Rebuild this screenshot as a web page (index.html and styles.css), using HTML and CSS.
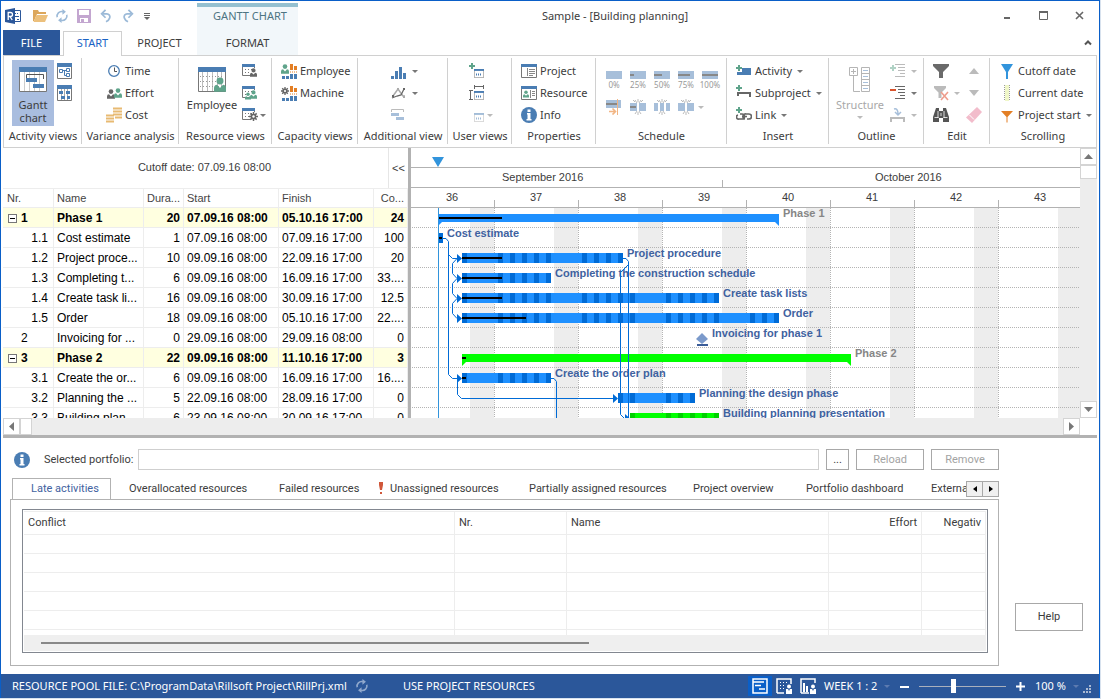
FILE: index.html
```html
<!DOCTYPE html>
<html lang="en">
<head>
<meta charset="utf-8">
<title>Sample - [Building planning]</title>
<link rel="stylesheet" href="styles.css">
</head>
<body>
<svg class="defs" width="0" height="0" aria-hidden="true">
  <symbol id="i-refresh" viewBox="0 0 16 16"><path d="M2.500 9.500A5.300 5.300 0 0 1 9 3M13.500 6.500A5.300 5.300 0 0 1 7 13" fill="none" stroke="currentColor" stroke-width="1.800"/><path d="M8.500 0l4 3.200-4 3.300zM7.500 9.500v6.500l-4-3.200z" fill="currentColor"/></symbol>
  <symbol id="i-undo" viewBox="0 0 16 16"><path d="M4.500 5.500H9a3.500 3.500 0 0 1 3.300 4.500Q11.500 13 8 14.500" fill="none" stroke="currentColor" stroke-width="2"/><path d="M7.500 1L3 5.500 7.500 10" fill="none" stroke="currentColor" stroke-width="2"/></symbol>
  <symbol id="i-info" viewBox="0 0 16 16"><circle cx="8" cy="8" r="8" fill="#4a7db3"/><path d="M6.500 2.500h3v2.400h-3zM6 6h3.500v6h1v1.500h-5V12h1V7.500H6z" fill="#fff"/></symbol>
  <symbol id="i-person" viewBox="0 0 10 12"><circle cx="5" cy="3" r="2.900" fill="currentColor"/><path d="M0 12V9q0-2.500 2.500-2.700L5 9l2.500-2.700Q10 6.500 10 9v3z" fill="currentColor"/></symbol>
  <symbol id="i-gear" viewBox="0 0 12 12"><path d="M6 0v12M0 6h12M1.800 1.800l8.400 8.400M10.200 1.800l-8.400 8.400" stroke="currentColor" stroke-width="2"/><circle cx="6" cy="6" r="3.800" fill="currentColor"/><circle cx="6" cy="6" r="1.600" fill="#fff"/></symbol>
  <symbol id="i-grid" viewBox="0 0 16 16"><path d="M.5 4v8.500H9M12.500 4v1" fill="none" stroke="#777"/><path d="M3 6.500h9M3 9.500h6" stroke="#777" stroke-dasharray="1 2"/><path d="M0 1h13v3H0z" fill="#4a7db3"/></symbol>
  <symbol id="i-plus" viewBox="0 0 6 6"><path d="M2 0h2v2h2v2H4v2H2V4H0V2h2z" fill="currentColor"/></symbol>
  <symbol id="i-bars" viewBox="0 0 16 16"><path d="M1 13h3v3H1zM5 13h3v3H5zM9 11h3v5H9zM13 11h3v5h-3z" fill="#4a7db3"/><path d="M9 1h3v6H9zM13 3h3v4h-3z" fill="#e37f25"/><path d="M9 9h7" stroke="#e37f25" stroke-dasharray="1 1"/></symbol>
  <symbol id="i-window" viewBox="0 0 16 14" preserveAspectRatio="none"><path d="M.5.5h15v13H.5z" fill="#fff" stroke="#777"/><path d="M0 0h16v3H0z" fill="#4a7db3"/></symbol>
  <symbol id="i-spark" viewBox="0 0 16 16"><path d="M5 1l2 3M8 0v3M11 1L9 4M3 1l2 2M13 1l-2 2M5 15l2-3M8 16v-3M11 15l-2-3" stroke="#bbb"/></symbol>
  <symbol id="i-outline" viewBox="0 0 10 14"><path d="M0 .5h10M3 3.500h7M3 6.500h7M5 9.500h5M0 12.500h10" stroke="currentColor" stroke-width="1"/></symbol>
  <symbol id="i-pin" viewBox="0 0 12 16"><path d="M0 1h12L7 9v7H5V9z" fill="currentColor"/></symbol>
</svg>

<div class="window">
  <header class="titlebar">
    <div class="quick">
      <svg class="logo" viewBox="0 0 16 16"><path d="M7.500 2.500h8v11h-8z" fill="#fff" stroke="#2b579a"/><path d="M9 5.500h2M10 8.500h4M12 11.500h2M9 11.500h1M12 5.500h1" stroke="#2b579a"/><path d="M0 2l10-2v16L0 14z" fill="#2b579a"/><path d="M3.200 12V4.500h2.300a1.800 1.800 0 0 1 0 4H3.200M5 8.500L7.200 12" fill="none" stroke="#fff" stroke-width="1.300"/></svg>
      <button aria-label="Open"><svg viewBox="0 0 16 16"><path d="M1 13V2h5l1 2h7v2H5L2 13z" fill="#dca75c"/><path d="M4.500 7H16l-3 7H1.500z" fill="#ecc07c"/></svg></button>
      <button class="pale" aria-label="Refresh"><svg><use href="#i-refresh"/></svg></button>
      <button aria-label="Save"><svg viewBox="0 0 16 16"><path d="M1 1h14v14H1z" fill="#c3a6d0"/><path d="M3 2h10v5H3zM4 10h8v4H4z" fill="#fff"/><path d="M5 11h3v3H5z" fill="#c3a6d0"/></svg></button>
      <button class="pale" aria-label="Undo"><svg><use href="#i-undo"/></svg></button>
      <button class="pale flip" aria-label="Redo"><svg><use href="#i-undo"/></svg></button>
      <button class="narrow" aria-label="Customize"><svg viewBox="0 0 16 16"><path d="M5 5.500h6M5 7.500h6" stroke="#666"/><path d="M5 9h6l-3 3z" fill="#666"/></svg></button>
    </div>
    <div class="context-title">GANTT CHART</div>
    <div class="title">Sample - [Building planning]</div>
    <div class="controls">
      <button aria-label="Minimize"><svg viewBox="0 0 16 16"><path d="M5 10h6" stroke="#666" stroke-width="2"/></svg></button>
      <button aria-label="Maximize"><svg viewBox="0 0 16 16"><path d="M4.500 4.500h8v7h-8z" fill="none" stroke="#666"/><path d="M4 4h9" stroke="#666" stroke-width="2"/></svg></button>
      <button aria-label="Close"><svg viewBox="0 0 16 16"><path d="M5 4l7 7M12 4l-7 7" stroke="#666" stroke-width="1.600"/></svg></button>
    </div>
  </header>
  <nav class="tabs">
    <button class="tab file">FILE</button>
    <button class="tab start">START</button>
    <button class="tab project">PROJECT</button>
    <button class="tab format">FORMAT</button>
    <button class="collapse" aria-label="Collapse ribbon"><svg viewBox="0 0 16 16"><path d="M5 9.500l3-3 3 3" fill="none" stroke="#555" stroke-width="2"/></svg></button>
  </nav>

  <div class="ribbon">
    <section class="group g-activity">
      <div class="body">
        <button class="big active"><svg class="icon-l" viewBox="0 0 28 25"><path d="M.5 2.500h27v22H.5z" fill="#fff" stroke="#777"/><path d="M5.500 5v19M10.500 5v19M15.500 5v19M20.500 5v19" stroke="#ccc"/><path d="M0 0h28v5H0z" fill="#4a7db3"/><path d="M7.500 12V7.500h17V12" fill="none" stroke="#555"/><path d="M7 11h11v4H7zM14 17h11v4H14z" fill="#4a7db3"/></svg><span>Gantt<br>chart</span></button>
        <div class="col">
          <button class="cmd" aria-label="Network"><svg viewBox="0 0 16 16"><path d="M.5.5h14v15H.5z" fill="#fff" stroke="#777"/><path d="M0 0h15v4H0z" fill="#4a7db3"/><path d="M2.500 6.500h3v3h-3zM9.500 5.500h3v3h-3zM9.500 10.500h3v3h-3zM5.500 7.500h4M7.500 7.500v5h2" fill="none" stroke="#4a7db3"/></svg></button>
          <button class="cmd" aria-label="Phase plan"><svg viewBox="0 0 16 16"><path d="M.5.5h14v15H.5z" fill="#fff" stroke="#777"/><path d="M4.500 4v11M7.500 4v11M10.500 4v11" stroke="#aaa"/><path d="M0 0h15v4H0zM2 6h4v3H2zM9 6h4v3H9zM4 11h4v3H4zM10 11h3v3h-3z" fill="#4a7db3"/></svg></button>
        </div>
      </div>
      <h2>Activity views</h2>
    </section>
    <section class="group g-variance">
      <div class="body"><div class="col">
        <button class="cmd"><svg viewBox="0 0 16 16"><circle cx="8" cy="8" r="5.300" fill="#fff" stroke="#4a7db3" stroke-width="1.300"/><path d="M8.500 4.500v4H11" fill="none" stroke="#555"/></svg>Time</button>
        <button class="cmd"><svg viewBox="0 0 16 16"><use href="#i-person" x="1" y="4" width="8" height="10" color="#666"/><use href="#i-person" x="8" y="3" width="8" height="10" color="#5fa48b"/></svg>Effort</button>
        <button class="cmd"><svg viewBox="0 0 16 16"><path d="M7 1.500h9M7 4.500h9M7 7.500h9M9 10.500h7M0 8.500h8M0 11.500h8M0 14.500h8" stroke="#e8ba72" stroke-width="2"/></svg>Cost</button>
      </div></div>
      <h2>Variance analysis</h2>
    </section>
    <section class="group g-resource">
      <div class="body">
        <button class="big"><svg class="icon-l" viewBox="0 0 28 25"><path d="M.5 2.500h27v22H.5z" fill="#fff" stroke="#777"/><path d="M4.500 5v19M9.500 5v19M14.500 5v19M19.500 5v19M23.500 5v19" stroke="#bbb"/><path d="M2 9.500h24M2 14.500h24M2 19.500h24" stroke="#999" stroke-dasharray="1 2"/><path d="M0 0h28v5H0z" fill="#4a7db3"/><use href="#i-person" x="16" y="10" width="12" height="15" color="#5fa48b"/></svg><span>Employee</span></button>
        <div class="col">
          <button class="cmd" aria-label="Employee load"><svg viewBox="0 0 16 16"><use href="#i-grid"/><use href="#i-person" x="8" y="5" width="7" height="9" color="#666"/></svg></button>
          <button class="cmd" aria-label="Team load"><svg viewBox="0 0 16 16"><use href="#i-grid"/><use href="#i-person" x="3" y="7" width="6" height="8" color="#5fa48b"/><use href="#i-person" x="8" y="5" width="7" height="9" color="#5fa48b"/></svg></button>
          <button class="cmd" aria-label="Machine load"><svg viewBox="0 0 16 16"><use href="#i-grid"/><use href="#i-gear" x="7" y="5" width="9" height="9" color="#666"/></svg><i class="caret"></i></button>
        </div>
      </div>
      <h2>Resource views</h2>
    </section>
    <section class="group g-capacity">
      <div class="body"><div class="col">
        <button class="cmd"><svg viewBox="0 0 16 16"><use href="#i-bars"/><use href="#i-person" x="0" y="1" width="8" height="10" color="#5fa48b"/></svg>Employee</button>
        <button class="cmd"><svg viewBox="0 0 16 16"><use href="#i-bars"/><use href="#i-gear" x="0" y="2" width="8" height="8" color="#666"/></svg>Machine</button>
      </div></div>
      <h2>Capacity views</h2>
    </section>
    <section class="group g-additional">
      <div class="body"><div class="col">
        <button class="cmd" aria-label="Histogram"><svg viewBox="0 0 16 16"><path d="M0 13h3v3H0zM4 8h3v8H4zM8 4h3v12H8zM12 10h3v6h-3z" fill="#4a7db3"/></svg><i class="caret"></i></button>
        <button class="cmd" aria-label="Curves"><svg viewBox="0 0 16 16"><path d="M2 11L7 4l5 7h2" fill="none" stroke="#aaa" stroke-width="1.500"/><path d="M1 13l5-2 4-1 3-6" fill="none" stroke="#666" stroke-width="1.300"/><path d="M1 10h2v2H1zM12 3h2v2h-2z" fill="#666"/><path d="M6 3h2v2H6zM12 11h2v2h-2z" fill="#aaa"/></svg><i class="caret"></i></button>
        <button class="cmd" aria-label="Bars"><svg viewBox="0 0 16 16"><path d="M.5 5V2.500h12V5" fill="none" stroke="#bbb"/><path d="M0 6h8v3H0zM5 10h8v3H5z" fill="#a7bfda"/></svg></button>
      </div></div>
      <h2>Additional view</h2>
    </section>
    <section class="group g-user">
      <div class="body"><div class="col">
        <button class="cmd" aria-label="Add view"><svg viewBox="0 0 16 16"><use href="#i-plus" x="0" y="0" width="6" height="6" color="#5fa48b"/><use href="#i-window" x="5" y="6" width="10" height="9"/><path d="M7 11.500h6" stroke="#4a7db3" stroke-width="2" stroke-dasharray="1 1"/></svg></button>
        <button class="cmd" aria-label="Size view"><svg viewBox="0 0 16 16"><path d="M5.500 0v4M14.500 0v4M5 1.500h10M0 5.500h4M0 14.500h4M1.500 5v10" stroke="#666"/><use href="#i-window" x="5" y="6" width="10" height="9"/><path d="M7 11.500h6" stroke="#4a7db3" stroke-width="2" stroke-dasharray="1 1"/></svg></button>
        <button class="cmd off" aria-label="Delete view"><svg viewBox="0 0 16 16"><use href="#i-window" x="5" y="6" width="10" height="9"/><path d="M7 11.500h6" stroke="#4a7db3" stroke-width="2" stroke-dasharray="1 1"/></svg><i class="caret"></i></button>
      </div></div>
      <h2>User views</h2>
    </section>
    <section class="group g-properties">
      <div class="body"><div class="col">
        <button class="cmd"><svg viewBox="0 0 16 16"><use href="#i-window" x="0" y="1" width="16" height="14"/><path d="M6.500 5v8M8 6.500h6M8 8.500h6M8 10.500h6M8 12.500h4" stroke="#888"/></svg>Project</button>
        <button class="cmd"><svg viewBox="0 0 16 16"><use href="#i-window" x="0" y="1" width="16" height="14"/><use href="#i-person" x="2" y="5" width="6" height="8" color="#5fa48b"/><path d="M9.500 5v8M11 6.500h3M11 8.500h3M11 10.500h3" stroke="#888"/></svg>Resource</button>
        <button class="cmd"><svg><use href="#i-info"/></svg>Info</button>
      </div></div>
      <h2>Properties</h2>
    </section>
    <section class="group g-schedule">
      <div class="body">
        <button class="pct"><svg viewBox="0 0 16 8"><path d="M0 0h16v8H0z" fill="#a7bfda"/></svg>0%</button>
        <button class="pct"><svg viewBox="0 0 16 8"><path d="M0 0h16v8H0z" fill="#a7bfda"/><path d="M0 4h4" stroke="#888" stroke-width="2"/></svg>25%</button>
        <button class="pct"><svg viewBox="0 0 16 8"><path d="M0 0h16v8H0z" fill="#a7bfda"/><path d="M0 4h8" stroke="#888" stroke-width="2"/></svg>50%</button>
        <button class="pct"><svg viewBox="0 0 16 8"><path d="M0 0h16v8H0z" fill="#a7bfda"/><path d="M0 4h12" stroke="#888" stroke-width="2"/></svg>75%</button>
        <button class="pct"><svg viewBox="0 0 16 8"><path d="M0 0h16v8H0z" fill="#a7bfda"/><path d="M0 4h16" stroke="#888" stroke-width="2"/></svg>100%</button>
        <button class="cmd" aria-label="Move to cutoff date"><svg viewBox="0 0 16 16"><path d="M0 1h15v8H0z" fill="#a7bfda"/><path d="M0 5h12" stroke="#888" stroke-width="2"/><path d="M11.500 0v16" stroke="#f2b583"/><path d="M3 12.500h6M6.500 9.500l3 3-3 3" fill="none" stroke="#f2b583" stroke-width="1.600"/></svg></button>
        <button class="cmd" aria-label="Split"><svg viewBox="0 0 16 16"><path d="M0 4h7v8H0zM9 4h7v8H9z" fill="#a7bfda"/><path d="M0 8h6" stroke="#888" stroke-width="2"/><use href="#i-spark"/></svg></button>
        <button class="cmd" aria-label="Split parts"><svg viewBox="0 0 16 16"><path d="M0 4h4v8H0zM6 4h4v8H6zM12 4h4v8h-4z" fill="#a7bfda"/><use href="#i-spark"/></svg></button>
        <button class="cmd" aria-label="Join"><svg viewBox="0 0 16 16"><path d="M0 4h7v8H0zM9 4h7v8H9z" fill="#a7bfda"/><use href="#i-spark"/></svg></button>
        <button class="cmd faint more" aria-label="More"><i class="caret"></i></button>
      </div>
      <h2>Schedule</h2>
    </section>
    <section class="group g-insert">
      <div class="body"><div class="col">
        <button class="cmd"><svg viewBox="0 0 16 16"><path d="M6 5h9v7H1V9h5z" fill="#4a7db3"/><use href="#i-plus" x="0" y="2" width="6" height="6" color="#5fa48b"/></svg>Activity<i class="caret"></i></button>
        <button class="cmd"><svg viewBox="0 0 16 16"><path d="M2 11V8h12v4" fill="none" stroke="#666" stroke-width="2"/><use href="#i-plus" x="0" y="0" width="6" height="6" color="#5fa48b"/></svg>Subproject<i class="caret"></i></button>
        <button class="cmd"><svg viewBox="0 0 16 16"><path d="M4 7h2a2 2 0 0 1 0 5H3a2 2 0 0 1-1-4M9 12a2 2 0 1 1 1-5h3a2 2 0 0 1 0 5h-2M6 9.500h5" fill="none" stroke="#666" stroke-width="1.700"/><use href="#i-plus" x="0" y="0" width="6" height="6" color="#5fa48b"/></svg>Link<i class="caret"></i></button>
      </div></div>
      <h2>Insert</h2>
    </section>
    <section class="group g-outline">
      <div class="body">
        <button class="big faint"><svg class="icon-l" viewBox="0 0 28 25"><path d="M3.500.5h8v8h-8zM7.500 9v15.500H14M5 4.500h5M7.500 2v5" fill="none" stroke="#b5b5b5"/><path d="M15.500.5h8v24h-8zM15.500 6.500h8M15.500 12.500h8M15.500 18.500h8" fill="none" stroke="#b5b5b5"/><path d="M17 3.500h5M17 9.500h5M17 15.500h5M17 21.500h5" stroke="#a7bfda"/></svg><span>Structure</span><i class="caret"></i></button>
        <div class="col">
          <button class="cmd faint" aria-label="Indent"><svg viewBox="0 0 16 16"><use href="#i-outline" x="5" y="1" width="10" height="14" color="#bbb"/><use href="#i-plus" x="0" y="2" width="6" height="6" color="#b0d2c5"/></svg><i class="caret"></i></button>
          <button class="cmd" aria-label="Outdent"><svg viewBox="0 0 16 16"><use href="#i-outline" x="5" y="1" width="10" height="14" color="#666"/><path d="M0 5h6" stroke="#d9532c" stroke-width="2"/></svg><i class="caret"></i></button>
          <button class="cmd faint" aria-label="Move outline"><svg viewBox="0 0 16 16"><path d="M1 15v-4h13v4" fill="none" stroke="#bbb" stroke-width="2"/><path d="M4 2q4-1 4 5M5 5l3 3 3-3" fill="none" stroke="#a7bfda" stroke-width="1.500"/></svg><i class="caret"></i></button>
        </div>
      </div>
      <h2>Outline</h2>
    </section>
    <section class="group g-edit">
      <div class="body">
        <div class="col">
          <button class="cmd" aria-label="Filter"><svg viewBox="0 0 16 16"><path d="M0 1h16v2l-6 6v6H6V9L0 3z" fill="#6a6a6a"/></svg></button>
          <button class="cmd faint" aria-label="Clear filter"><svg viewBox="0 0 16 16"><path d="M1 1h12v2L8.500 7.500V13h-3V7.500L1 3z" fill="#bbb"/><path d="M8 7l7 8M15 7l-7 8" stroke="#ee9d8c" stroke-width="1.600"/></svg><i class="caret"></i></button>
          <button class="cmd" aria-label="Find"><svg viewBox="0 0 16 16"><path d="M3 1h3v3h4V1h3l3 9v5h-6v-4H6v4H0v-5z" fill="#555"/><path d="M5 4v7M11 4v7M8 6v3M1.500 10.500h4M10.500 10.500h4" stroke="#fff" stroke-width=".8"/></svg></button>
        </div>
        <div class="col">
          <button class="cmd" aria-label="Up"><svg viewBox="0 0 16 16"><path d="M3 11h10L8 5z" fill="#bbb"/></svg></button>
          <button class="cmd" aria-label="Down"><svg viewBox="0 0 16 16"><path d="M3 5h10l-5 6z" fill="#bbb"/></svg></button>
          <button class="cmd" aria-label="Erase"><svg viewBox="0 0 16 16"><path d="M11 0l5 5L6 16 0 10.500z" fill="#f2bccb"/><path d="M3.500 8L8 12.500" stroke="#fff"/></svg></button>
        </div>
      </div>
      <h2>Edit</h2>
    </section>
    <section class="group g-scrolling">
      <div class="body"><div class="col">
        <button class="cmd"><svg class="blue"><use href="#i-pin"/></svg>Cutoff date</button>
        <button class="cmd"><svg viewBox="0 0 16 16"><path d="M6 0h4v16H6z" fill="#f0f7c9"/><path d="M5.500 0v16M10.500 0v16" stroke="#999" stroke-dasharray="1 1"/></svg>Current date</button>
        <button class="cmd"><svg viewBox="0 0 16 16"><path d="M2 4h12L8.500 10v5.500h-1V10z" fill="#e37f25"/></svg>Project start<i class="caret"></i></button>
      </div></div>
      <h2>Scrolling</h2>
    </section>
  </div>

  <main class="work">
    <section class="sheet">
      <div class="cutoff"><span>Cutoff date: 07.09.16 08:00</span><button>&lt;&lt;</button></div>
      <table class="plan">
        <colgroup><col class="c-nr"><col class="c-name"><col class="c-dur"><col class="c-date"><col class="c-date"><col class="c-cost"></colgroup>
        <thead><tr><th>Nr.</th><th>Name</th><th class="num">Dura...</th><th>Start</th><th>Finish</th><th class="num">Co...</th></tr></thead>
        <tbody>
          <tr class="phase"><td class="top"><button class="fold" aria-label="Collapse"></button>1</td><td>Phase 1</td><td class="num">20</td><td>07.09.16 08:00</td><td>05.10.16 17:00</td><td class="num">24</td></tr>
          <tr><td class="num sub">1.1</td><td>Cost estimate</td><td class="num">1</td><td>07.09.16 08:00</td><td>07.09.16 17:00</td><td class="num">100</td></tr>
          <tr><td class="num sub">1.2</td><td>Project proce...</td><td class="num">10</td><td>09.09.16 08:00</td><td>22.09.16 17:00</td><td class="num">20</td></tr>
          <tr><td class="num sub">1.3</td><td>Completing t...</td><td class="num">6</td><td>09.09.16 08:00</td><td>16.09.16 17:00</td><td class="num">33....</td></tr>
          <tr><td class="num sub">1.4</td><td>Create task li...</td><td class="num">16</td><td>09.09.16 08:00</td><td>30.09.16 17:00</td><td class="num">12.5</td></tr>
          <tr><td class="num sub">1.5</td><td>Order</td><td class="num">18</td><td>09.09.16 08:00</td><td>05.10.16 17:00</td><td class="num">22....</td></tr>
          <tr><td class="leaf">2</td><td>Invoicing for ...</td><td class="num">0</td><td>29.09.16 08:00</td><td>29.09.16 08:00</td><td class="num">0</td></tr>
          <tr class="phase"><td class="top"><button class="fold" aria-label="Collapse"></button>3</td><td>Phase 2</td><td class="num">22</td><td>09.09.16 08:00</td><td>11.10.16 17:00</td><td class="num">3</td></tr>
          <tr><td class="num sub">3.1</td><td>Create the or...</td><td class="num">6</td><td>09.09.16 08:00</td><td>16.09.16 17:00</td><td class="num">16....</td></tr>
          <tr><td class="num sub">3.2</td><td>Planning the ...</td><td class="num">5</td><td>22.09.16 08:00</td><td>28.09.16 17:00</td><td class="num">0</td></tr>
          <tr><td class="num sub">3.3</td><td>Building plan...</td><td class="num">6</td><td>23.09.16 08:00</td><td>30.09.16 17:00</td><td class="num">0</td></tr>
        </tbody>
      </table>
    </section>
    <div class="splitter"></div>
    <section class="gantt">
      <div class="marker"><svg viewBox="0 0 12 10"><path d="M0 0h12L6 10z" fill="#3294dc"/></svg></div>
      <div class="months"><span class="sep">September 2016</span><span class="oct">October 2016</span></div>
      <div class="weeks"><span>36</span><span>37</span><span>38</span><span>39</span><span>40</span><span>41</span><span>42</span><span>43</span></div>
      <svg class="chart" aria-label="Gantt chart">
        <defs>
          <pattern id="grid" patternUnits="userSpaceOnUse" x="494" y="208" width="84" height="20"><path d="M60 0h24v20H60z" fill="#ededed"/><path d="M0 19.500h84M.5 0v20" stroke="#b4b4b4" stroke-dasharray="1 1"/></pattern>
          <pattern id="days" patternUnits="userSpaceOnUse" x="494" y="0" width="84" height="20"><path d="M4 0h5v20H4zM16 0h5v20h-5zM28 0h5v20h-5zM40 0h5v20h-5zM52 0h5v20h-5z" fill="#006bd6"/></pattern>
          <pattern id="days-green" patternUnits="userSpaceOnUse" x="494" y="0" width="84" height="20"><path d="M4 0h5v20H4zM16 0h5v20h-5zM28 0h5v20h-5zM40 0h5v20h-5zM52 0h5v20h-5z" fill="#00d000"/></pattern>
        </defs>
        <g transform="translate(-411 -208)">
          <rect x="411" y="208" width="3000" height="2000" fill="url(#grid)"/>
          <path class="blue-bar" d="M438 214h341v12l-4-4H442l-4 4z"/>
          <path class="green-bar" d="M462 354h389v12l-4-4H466l-4 4z"/>
          <g class="blue-bar"><path d="M462 253h161v10H462zM462 273h89v10h-89zM462 293h257v10H462zM462 313h317v10H462zM462 373h89v10h-89zM618 393h77v10h-77z"/></g>
          <path d="M438 233h5v10h-5z" fill="#006bd6"/>
          <path class="green-bar" d="M630 413h89v10h-89z"/>
          <path d="M462 253h161v10H462zM462 273h89v10h-89zM462 293h257v10H462zM462 313h317v10H462zM462 373h89v10h-89zM618 393h77v10h-77z" fill="url(#days)"/>
          <path d="M630 413h89v10h-89z" fill="url(#days-green)"/>
          <path d="M438 218h64M438 238h4M462 258h40M462 278h40M462 298h40M462 318h64M462 358h4M462 378h4" stroke="#000" stroke-width="2"/>
          <path d="M702 333l6 6-6 5-6-5z" fill="#7b9acb"/><path d="M697 345h11" stroke="#3b5d99" stroke-width="2"/>
          <g class="bar-labels">
            <text class="grey" x="783" y="217">Phase 1</text>
            <text x="447" y="237">Cost estimate</text>
            <text x="627" y="257">Project procedure</text>
            <text x="555" y="277">Completing the construction schedule</text>
            <text x="723" y="297">Create task lists</text>
            <text x="783" y="317">Order</text>
            <text x="712" y="337">Invoicing for phase 1</text>
            <text class="grey" x="855" y="357">Phase 2</text>
            <text x="555" y="377">Create the order plan</text>
            <text x="699" y="397">Planning the design phase</text>
            <text x="723" y="417">Building planning presentation</text>
          </g>
          <path d="M438.500 208v2000" stroke="#3294dc"/>
          <path d="M443 238.500h3l2.500 3V374.500l4 4H457M448.500 254.500l4 4H457M457 258.500l-4.500 5v10l4.500 5-4.500 5v10l4.500 5-4.500 5v10l4.500 5M623 258.500h3l2.500 3V418M628.500 264.500l-8 8V414.500l4 4M551 378.500h3l2.500 3V430M457.500 379v15.500l4 4H613" fill="none" stroke="#006bd6"/>
          <path d="M457 254l5 4.500-5 4.500zM457 274l5 4.500-5 4.500zM457 294l5 4.500-5 4.500zM457 314l5 4.500-5 4.500zM457 374l5 4.500-5 4.500zM613 394l5 4.500-5 4.500zM625 414l5 4.500-5 4.500z" fill="#006bd6"/>
        </g>
      </svg>
    </section>
    <div class="vscroll"><button aria-label="Scroll up"><svg viewBox="0 0 9 5"><path d="M0 5h9L4.500 0z" fill="#777"/></svg></button><div class="thumb"></div><button class="end" aria-label="Scroll down"><svg viewBox="0 0 9 5"><path d="M0 0h9L4.500 5z" fill="#777"/></svg></button></div>
    <div class="hscroll"><button aria-label="Scroll left"><svg viewBox="0 0 5 9"><path d="M5 0v9L0 4.500z" fill="#777"/></svg></button><div class="thumb"></div><button class="end" aria-label="Scroll right"><svg viewBox="0 0 5 9"><path d="M0 0v9l5-4.500z" fill="#777"/></svg></button></div>
    <div class="hsplit"></div>
  </main>

  <section class="lower">
    <div class="portfolio">
      <svg class="info"><use href="#i-info"/></svg>
      <label for="portfolio">Selected portfolio:</label>
      <input id="portfolio" type="text">
      <button class="btn dots">...</button>
      <button class="btn" disabled>Reload</button>
      <button class="btn" disabled>Remove</button>
    </div>
    <div class="subtabs">
      <button class="late">Late activities</button>
      <button class="over">Overallocated resources</button>
      <button class="failed">Failed resources</button>
      <button class="unassigned"><svg viewBox="0 0 4 13"><path d="M0 0h4v3L3 8H1L0 3zM1 10h2v2H1z" fill="#d0573a"/></svg>Unassigned resources</button>
      <button class="partial">Partially assigned resources</button>
      <button class="overview">Project overview</button>
      <button class="dash">Portfolio dashboard</button>
      <button class="external">External</button>
      <span class="spin"><button aria-label="Previous tab"><svg viewBox="0 0 4 6"><path d="M4 0v6L0 3z"/></svg></button><button aria-label="Next tab"><svg viewBox="0 0 4 6"><path d="M0 0v6l4-3z"/></svg></button></span>
    </div>
    <div class="panel">
      <div class="list">
        <table>
          <colgroup><col class="k-conflict"><col class="k-nr"><col><col class="k-effort"><col class="k-neg"></colgroup>
          <thead><tr><th>Conflict</th><th>Nr.</th><th>Name</th><th class="num">Effort</th><th class="num">Negativ</th></tr></thead>
          <tbody>
            <tr><td></td><td></td><td></td><td></td><td></td></tr>
            <tr><td></td><td></td><td></td><td></td><td></td></tr>
            <tr><td></td><td></td><td></td><td></td><td></td></tr>
            <tr><td></td><td></td><td></td><td></td><td></td></tr>
            <tr><td></td><td></td><td></td><td></td><td></td></tr>
            <tr class="cut"><td></td><td></td><td></td><td></td><td></td></tr>
          </tbody>
        </table>
        <div class="list-scroll"><div></div></div>
      </div>
    </div>
    <button class="btn help">Help</button>
  </section>

  <footer class="status">
    <span class="pool">RESOURCE POOL FILE: C:\ProgramData\Rillsoft Project\RillPrj.xml</span>
    <svg class="sync"><use href="#i-refresh"/></svg>
    <span>USE PROJECT RESOURCES</span>
    <div class="right">
      <button class="view on" aria-label="Gantt view"><svg viewBox="0 0 16 16"><path d="M1 1h14v14H1z" fill="none" stroke="#fff" stroke-width="1.500"/><path d="M1 4h11M3 7.500h6M7 11h6" stroke="#fff" stroke-width="1.500"/></svg></button>
      <button class="view" aria-label="Resource view"><svg viewBox="0 0 16 16"><path d="M1 15V1h14v5M1 15h7" fill="none" stroke="#fff" stroke-width="1.500"/><path d="M4 4.500h9M4 7.500h6M4 10.500h5" stroke="#fff" stroke-dasharray="1 2"/><circle cx="13" cy="8.500" r="2" fill="#fff"/><path d="M10 11h2l1 2 1-2h2v5h-6z" fill="#fff"/></svg></button>
      <button class="view" aria-label="Capacity view"><svg viewBox="0 0 16 16"><path d="M1 15V1h14v4M1 15h8" fill="none" stroke="#fff" stroke-width="1.500"/><path d="M3 5h2v9H3zM6 8h2v6H6z" fill="#fff"/><circle cx="13" cy="8.500" r="2" fill="#fff"/><path d="M10 11h2l1 2 1-2h2v5h-6z" fill="#fff"/></svg></button>
      <button class="scale">WEEK 1 : 2<i class="caret"></i></button>
      <button class="step" aria-label="Zoom out"><svg viewBox="0 0 9 9"><path d="M0 5h9" stroke="#fff" stroke-width="2"/></svg></button>
      <input type="range" min="0" max="100" value="39" aria-label="Zoom">
      <button class="step" aria-label="Zoom in"><svg viewBox="0 0 9 9"><path d="M0 4.500h9M4.500 0v9" stroke="#fff" stroke-width="2"/></svg></button>
      <button class="zoom">100 %<i class="caret"></i></button>
      <svg class="grip" viewBox="0 0 9 9"><path d="M6 0h2v2H6zM3 3h2v2H3zM6 3h2v2H6zM0 6h2v2H0zM3 6h2v2H3zM6 6h2v2H6z" fill="#a9b9d3"/></svg>
    </div>
  </footer>
</div>
</body>
</html>
```
FILE: styles.css
```css
* { box-sizing: border-box; }
body { margin: 0; background: #d8e2ee; font: 11px/14px "Noto Sans", "Open Sans", sans-serif; color: #3c3c3c; }
button { font: inherit; color: inherit; background: none; border: 0; padding: 0; margin: 0; }
button svg { display: block; flex: none; }
h2 { margin: 0; font: inherit; }
.defs { position: absolute; }
.window { display: flex; flex-direction: column; height: calc(100vh - 1px); margin-right: 1px; border: 1px solid #0a5fc8; border-bottom: 0; background: #fff; }
.caret { flex: none; width: 0; height: 0; border: 3px solid transparent; border-top-color: #777; border-bottom: 0; }

/* title bar and tabs */
.titlebar { display: flex; height: 29px; flex: none; padding: 0 2px; }
.quick { display: flex; align-items: center; width: 194px; padding-left: 2px; }
.quick button { width: 22px; display: grid; place-items: center; }
.quick svg, .controls svg { width: 16px; height: 16px; }
.quick .logo { margin-right: 8px; }
.quick .narrow { width: 14px; }
.quick .pale svg { width: 14px; height: 14px; }
.pale { color: #9cbad8; }
.flip svg { transform: scaleX(-1); }
.context-title { width: 101px; margin-top: 2px; padding-left: 5px; border-top: 4px solid #94c0d0; background: #f2f7fa; color: #4d7482; text-align: center; line-height: 18px; }
.title { flex: 1; text-align: center; line-height: 30px; }
.controls { display: flex; padding-left: 57px; }
.controls button { width: 36px; display: grid; place-items: center; }
.tabs { display: flex; height: 25px; flex: none; padding: 0 2px; }
.tab { text-align: center; }
.file { width: 57px; background: #2b579a; color: #fff; }
.start { width: 59px; height: 25px; margin: 1px 0 0 3px; padding-bottom: 2px; border: 1px solid #d0d0d0; border-bottom: 0; background: #fff; color: #1a63c5; position: relative; z-index: 1; }
.project { width: 75px; }
.format { width: 101px; background: #f2f7fa; }
.collapse { margin-left: auto; padding-right: 1px; }
.collapse svg { width: 16px; height: 16px; }

/* ribbon */
.ribbon { display: flex; flex: none; margin: 0 2px; height: 93px; border: 1px solid #d0d0d0; }
.group { flex: none; position: relative; }
.group::after { content: ""; position: absolute; right: 0; top: 2px; bottom: 3px; border-right: 1px solid #d0d0d0; }
.group:last-child::after { display: none; }
.body { display: flex; height: 70px; padding-top: 4px; }
.group h2 { text-align: center; line-height: 20px; white-space: nowrap; }
.col { display: grid; grid-auto-rows: 22px; align-content: start; }
.cmd { display: flex; align-items: center; gap: 3px; white-space: nowrap; height: 22px; }
.cmd svg { width: 16px; height: 16px; }
.cmd .caret { margin-left: 2px; }
.big { display: flex; flex-direction: column; align-items: center; padding-top: 7px; line-height: 13px; height: 66px; }
.big span { margin-top: 6px; }
.big .caret { margin-top: 5px; }
.icon-l { width: 28px; height: 25px; }
.active { background: #a9bddf; }
.off { opacity: .5; }
.faint { color: #a8a8a8; }
.faint .caret { border-top-color: #bbb; }
.blue { color: #3294dc; }
.g-activity { width: 78px; }
.g-activity .body { padding-left: 8px; gap: 3px; }
.g-activity .big { width: 42px; }
.g-variance { width: 97px; }
.g-variance .body { padding-left: 24px; }
.g-resource { width: 93px; }
.g-resource .body { padding-left: 7px; gap: 4px; }
.g-resource .big { width: 52px; }
.g-resource .cmd, .g-user .cmd { gap: 0; }
.g-capacity { width: 86px; }
.g-capacity .body { padding-left: 9px; }
.g-additional { width: 90px; }
.g-additional .body { padding-left: 33px; }
.g-user { width: 64px; }
.g-user .body { padding-left: 21px; }
.g-properties { width: 84px; }
.g-properties .body { padding-left: 9px; }
.g-schedule { width: 131px; }
.g-schedule .body { display: grid; grid-template-columns: repeat(5, 24px); grid-template-rows: 36px 26px; padding-left: 6px; }
.g-schedule .cmd { justify-content: center; }
.g-schedule .more { justify-content: flex-start; }
.more .caret { margin-left: 0; }
.pct { display: flex; flex-direction: column; align-items: center; padding-top: 11px; font-size: 8px; line-height: 11px; color: #999; }
.pct svg { width: 16px; height: 8px; flex: none; }
.g-insert { width: 102px; }
.g-insert .body { padding-left: 9px; }
.g-outline { width: 95px; }
.g-outline .body { padding-left: 6px; gap: 5px; }
.g-outline .big { width: 50px; }
.g-edit { width: 66px; }
.g-edit .body { padding-left: 9px; gap: 6px; }
.g-edit .cmd { gap: 3px; }
.g-scrolling { flex: 1; }
.g-scrolling .body { padding-left: 9px; }

/* plan area */
.work { flex: 1 1 0; min-height: 200px; display: grid; grid-template: minmax(0, 1fr) 17px 3px / 405px 3px minmax(0, 1fr) 17px; margin: 0 2px; }
.sheet { overflow: hidden; font-family: "Liberation Sans", Arial, sans-serif; }
.cutoff { display: flex; height: 40px; font-size: 11px; line-height: 39px; }
.cutoff span { flex: 1; text-align: center; padding-left: 18px; }
.cutoff button { width: 20px; border-left: 1px solid #e6e6e6; }
.splitter, .hsplit { background: #b2b2b2; }
.hsplit { grid-column: 1 / -1; grid-row: 3; }
.plan { table-layout: fixed; width: 405px; border-collapse: separate; border-spacing: 0; font-size: 12px; line-height: 18px; color: #000; }
.plan th, .plan td { height: 20px; padding: 1px 3px 0; border: 0 solid #ededed; border-width: 0 1px 1px 0; white-space: nowrap; overflow: hidden; text-align: left; }
.plan th { padding-top: 0; font-size: 11px; font-weight: normal; color: #444; border-top-width: 1px; }
.plan th:first-child { padding-left: 4px; }
.plan .num, .list .num { text-align: right; }
.plan .sub { padding-right: 5px; }
.plan .leaf { padding-left: 18px; }
.plan .top { padding-left: 5px; }
.phase td { font-weight: bold; background: #ffffe0; }
.fold { position: relative; width: 9px; height: 9px; margin-right: 4px; border: 1px solid #777; background: #fff; }
.fold::after { content: ""; position: absolute; left: 1px; top: 3px; width: 5px; height: 1px; background: #000; }
.c-nr { width: 51px; }
.c-name { width: 90px; }
.c-dur { width: 40px; }
.c-date { width: 95px; }
.c-cost { width: 34px; }

.gantt { display: flex; flex-direction: column; overflow: hidden; font-family: "Liberation Sans", Arial, sans-serif; }
.marker, .months, .weeks { flex: none; height: 20px; border-bottom: 1px solid #b2b2b2; display: flex; line-height: 19px; }
.marker { align-items: flex-end; padding-left: 21px; }
.marker svg { width: 12px; height: 10px; }
.months .sep { width: 312px; padding-left: 91px; }
.months .oct { padding-left: 152px; }
.months span, .weeks span { flex: none; background: linear-gradient(#b2b2b2, #b2b2b2) no-repeat right bottom / 1px 7px; }
.months .oct { background: none; }
.weeks { overflow: hidden; }
.weeks span { width: 84px; padding-right: 2px; text-align: center; }
.chart { display: block; width: 100%; flex: 1; min-height: 0; }
.blue-bar { fill: #1e90ff; }
.green-bar { fill: #0f0; }
.bar-labels { font-size: 11px; font-weight: bold; fill: #3f62a0; }
.bar-labels .grey { fill: #868686; }

.vscroll, .hscroll { display: flex; background: #ededed; }
.vscroll { flex-direction: column; }
.hscroll { grid-column: 1 / 4; }
.vscroll button, .hscroll button { width: 17px; height: 17px; flex: none; display: grid; place-items: center; background: #fff; border: 1px solid #d4d4d4; }
.vscroll svg { width: 9px; height: 5px; }
.hscroll svg { width: 5px; height: 9px; }
.thumb { background: #fff; border: 1px solid #d4d4d4; }
.vscroll .thumb { height: 14px; }
.hscroll .thumb { width: 12px; }
.vscroll .end { margin-top: auto; }
.hscroll .end { margin-left: auto; }

/* lower pane */
.lower { flex: none; display: grid; grid-template-columns: minmax(0, 1fr) 68px; column-gap: 16px; padding: 11px 16px 8px 9px; font: 11px/14px Roboto, "Liberation Sans", sans-serif; }
.portfolio { grid-column: 1; display: flex; align-items: center; gap: 7px; height: 21px; padding-left: 4px; }
.info { width: 16px; height: 16px; margin-right: 7px; }
.portfolio label { width: 87px; white-space: nowrap; }
.portfolio input { flex: 1; min-width: 0; height: 21px; border: 1px solid #cfcfcf; padding: 0 4px; font: inherit; }
.btn { width: 68px; height: 21px; border: 1px solid #a8a8a8; background: #fff; }
.btn:disabled { color: #a3a3a3; }
.dots { width: 23px; }
.subtabs { grid-column: 1; display: flex; margin-top: 8px; height: 21px; padding-left: 2px; position: relative; overflow: hidden; }
.subtabs button { flex: none; white-space: nowrap; text-align: left; }
.subtabs .late { width: 99px; padding-left: 18px; border: 1px solid #b2b2b2; border-bottom: 0; color: #3f62a0; }
.subtabs .over { width: 150px; padding-left: 18px; }
.subtabs .failed { width: 118px; padding-left: 18px; }
.subtabs .unassigned { width: 132px; display: flex; align-items: center; gap: 7px; }
.unassigned svg { width: 4px; height: 13px; }
.subtabs .partial { width: 164px; padding-left: 18px; }
.subtabs .overview { width: 113px; padding-left: 18px; }
.subtabs .dash { width: 125px; padding-left: 18px; }
.subtabs .external { padding-left: 18px; }
.spin { position: absolute; right: 0; top: 3px; display: flex; background: #f0f0f0; }
.spin button { width: 17px; height: 16px; border: 1px solid #a8a8a8; display: grid; place-items: center; }
.spin button + button { margin-left: -1px; }
.spin svg { width: 4px; height: 6px; }
.panel { grid-column: 1; border: 1px solid #b2b2b2; padding: 9px 10px 12px 11px; }
.list { border: 1px solid #828790; padding: 1px; }
.list table { table-layout: fixed; width: 100%; border-collapse: separate; border-spacing: 0; }
.list th, .list td { border: 0 solid #ededed; border-width: 0 1px 1px 0; height: 19px; padding: 0 4px; font-weight: normal; text-align: left; }
.list th { height: 24px; border-top-width: 1px; }
.list .cut td { height: 5px; border-bottom: 0; }
.k-conflict { width: 431px; }
.k-nr { width: 112px; }
.k-effort { width: 93px; }
.k-neg { width: 64px; }
.list-scroll { height: 16px; padding: 7px 0 0 17px; background: #efefef; }
.list-scroll div { width: 58%; height: 2px; background: #888; }
.help { grid-column: 2; grid-row: 3; align-self: end; height: 28px; margin-bottom: 35px; }

/* status bar */
.status { flex: none; height: 24px; display: flex; align-items: center; background: #2b579a; color: #fff; padding: 0 7px 0 11px; white-space: nowrap; }
.sync { width: 14px; height: 14px; margin: 0 34px 0 14px; color: #91a9cd; }
.pool { width: 329px; }
.right { margin-left: auto; display: flex; align-items: center; height: 24px; }
.view { width: 24px; height: 20px; display: grid; place-items: center; }
.view svg { width: 16px; height: 16px; }
.on { background: #0a5fc8; }
.scale, .zoom { display: flex; align-items: center; gap: 7px; }
.scale { width: 66px; margin-left: 4px; }
.zoom { width: 48px; }
.status .caret { border-top-color: #5d7bb0; }
.step { width: 29px; display: grid; place-items: center; }
.step svg { width: 9px; height: 9px; }
.status input { -webkit-appearance: none; appearance: none; width: 87px; height: 14px; margin: 0; background: linear-gradient(#a9b0bd, #a9b0bd) no-repeat center / 100% 1px; }
.status input::-webkit-slider-thumb { -webkit-appearance: none; width: 5px; height: 14px; background: #fff; }
.grip { width: 9px; height: 9px; margin-top: 6px; }
```
